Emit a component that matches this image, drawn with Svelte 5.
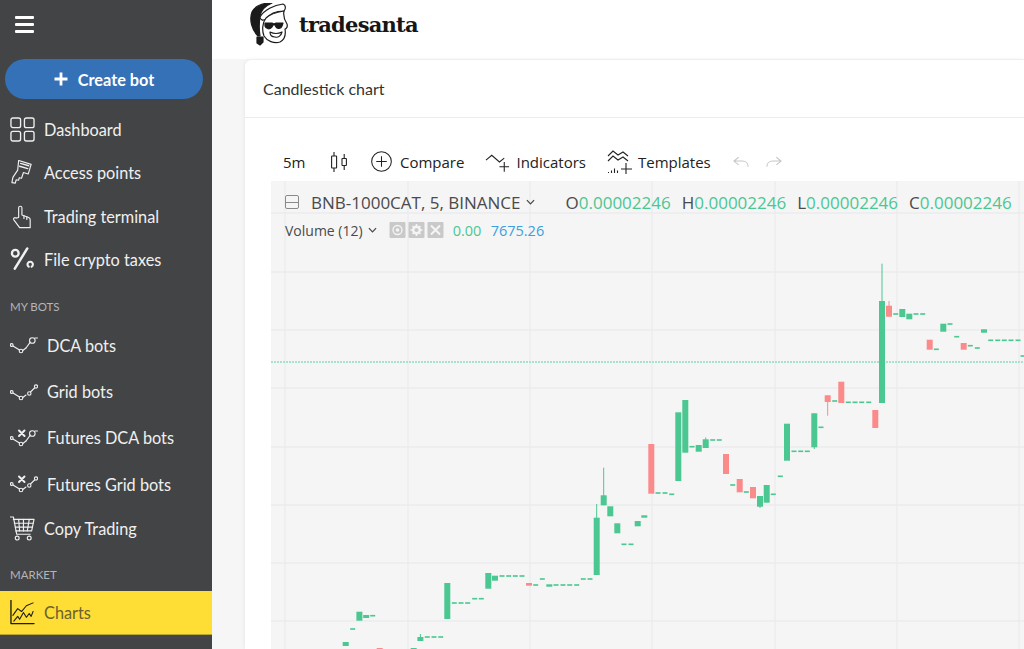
<script>
  const nav = [
    { label: "Dashboard", icon: "grid" },
    { label: "Access points", icon: "key" },
    { label: "Trading terminal", icon: "hand" },
    { label: "File crypto taxes", icon: "percent" }
  ];
  const bots = [
    { label: "DCA bots", icon: "dca" },
    { label: "Grid bots", icon: "gridbot" },
    { label: "Futures DCA bots", icon: "fdca" },
    { label: "Futures Grid bots", icon: "fgrid" }
  ];

  const vLines = [285, 408, 530, 652, 775, 897, 1019];
  const hLines = [213, 272, 330, 388, 447, 505, 563, 621];

  // x, top, bottom, optional wick top / bottom (page coordinates)
  const up = [
    [345.7, 642, 646], [359.4, 611.7, 620.7], [366.2, 615, 618], [413.7, 648, 652],
    [420.4, 637, 641, 634], [447.3, 583, 619], [488.3, 573, 588.7], [495, 575.7, 580.7],
    [549.3, 584.3, 586.7], [596.7, 517.7, 575, 504], [603.7, 495.3, 505.3, 467.7],
    [610.3, 506.3, 516.3], [617.3, 523.3, 533.3], [637.7, 521, 526.3], [644.3, 515.3, 517.7],
    [678.3, 412.3, 481], [685.3, 400, 452.7], [698.7, 445, 451.7], [705.7, 439.3, 448, 437.5],
    [760, 496, 506.7, 496, 508], [766.7, 485, 502.7], [787, 423.7, 460.7],
    [814.3, 413.3, 447.3, 413.3, 449], [882, 301, 403, 263.7], [902.3, 309, 317],
    [909.3, 313.7, 319.3], [943.3, 323.7, 331.7], [984, 329.3, 332.7]
  ];
  const down = [
    [379.7, 648, 652], [529, 583, 585.7], [651.3, 444, 493.7], [726, 454, 474],
    [739.7, 479, 492.3], [753, 487, 498.3], [827.7, 395.3, 402, 395.3, 415.7],
    [841.3, 381.7, 403], [875.3, 410, 428], [889, 305.7, 316.7, 301],
    [929.7, 339.7, 349.7], [963.7, 343, 349.7]
  ];
  // flat candles: x, y
  const flats = [
    [352.7, 629], [372.7, 615.7], [427.3, 637], [434, 637], [440.7, 637], [454.3, 603],
    [461, 603], [467.7, 603], [474.7, 598.7], [481.3, 598.7], [502, 576], [508.7, 576],
    [515.3, 576], [522, 576], [535.7, 585], [542.3, 579], [556, 585], [563, 585], [569.7, 585],
    [576.7, 585], [583.3, 579], [590, 579], [624, 544.3], [631, 544.3], [658, 493], [665, 493],
    [671.7, 494.3], [692, 446.7], [712.7, 440], [719.3, 440], [732.7, 485], [746.3, 492],
    [773.3, 494.3], [780.3, 476.3], [794, 451.3], [800.7, 451.3], [807.3, 451.3], [821, 427.3],
    [834.7, 401], [848.3, 402.3], [855, 402.3], [861.7, 402.3], [868.7, 402.3], [895.7, 314],
    [916, 314], [922.7, 314], [936.3, 349.3], [950, 324], [956.7, 336.7], [970.3, 345.7],
    [977.3, 348], [990.7, 340.3], [997.7, 340.3], [1004.3, 340.3], [1011, 340.3], [1018, 340.3],
    [1023, 356]
  ];
</script>

<div class="app">
  <aside class="sidebar">
    <button class="burger" aria-label="Menu"><span></span><span></span><span></span></button>
    <button class="create">
      <svg class="plus" viewBox="0 0 14 14" fill="none" stroke="#fff" stroke-width="2.800"><path d="M7 .5v13M.5 7h13" /></svg>
      Create bot
    </button>

    <nav class="group">
      {#each nav as item}
        <div class="item">
          <svg class="ico" viewBox="0 0 26 26" fill="none" stroke="currentColor" stroke-width="1.400" stroke-linecap="round" stroke-linejoin="round">
            {#if item.icon === "grid"}
              <rect x="1" y="1" width="10" height="10" rx="2" /><rect x="15" y="1" width="10" height="10" rx="2" />
              <rect x="1" y="15" width="10" height="10" rx="2" /><rect x="15" y="15" width="10" height="10" rx="2" />
            {:else if item.icon === "key"}
              <path d="M9 .5L22 4.500l-3 10-5-1.500-2 6-2.500-.5-.5 2.500-2.500-.5-1 3.500-3.500-.5 1-5.500 5-7.500z" stroke-width="1.200" /><path d="M11 3.500l8.500 2.500M10 6.500l8.500 2.500" />
            {:else if item.icon === "hand"}
              <path d="M9 14V4a1.700 1.700 0 0 1 3.400 0v7.500l7 2.500c1.300.5 1.600 1.300 1.600 2.500v8H10l-6-8c-1-1.400.8-3 2.300-1.800z" stroke-width="1.200" /><path d="M14.500 12v3M17.500 13v3" stroke-width="1.200" />
            {:else}
              <circle cx="5.500" cy="6.500" r="3.500" stroke-width="2.400" /><path d="M18 1.500L5 22.500" stroke-width="2.600" /><path d="M22.500 20.500a2.800 2.800 0 1 0-3 0" stroke-width="2.200" />
            {/if}
          </svg>
          <span>{item.label}</span>
        </div>
      {/each}
    </nav>

    <div class="heading first">MY BOTS</div>
    <nav class="group bots">
      {#each bots as item}
        <div class="item bot">
          <svg class="bot-ico" viewBox="0 0 28 18" fill="none" stroke="currentColor" stroke-width="1.100" stroke-linecap="round">
            <circle cx="1.700" cy="9" r="1.400" /><path d="M3 10l6.500 4" /><circle cx="11" cy="15" r="1.800" /><path d="M12.800 14.500l3.200-2.500" />
            {#if item.icon === "dca" || item.icon === "fdca"}
              <path d="M16 12l4.300-5.800" /><circle cx="22.300" cy="4.500" r="2.800" /><path d="M25 2h2.500" />
            {:else}
              <circle cx="19.300" cy="10.500" r="1.700" /><path d="M20.500 9l4-4" /><circle cx="26" cy="3.500" r="1.600" />
            {/if}
            {#if item.icon === "fdca" || item.icon === "fgrid"}
              <path d="M9 1.500l5.500 5.500M14.500 1.500L9 7" stroke-width="2" />
            {/if}
          </svg>
          <span>{item.label}</span>
        </div>
      {/each}
    </nav>

    <div class="item copy">
      <svg class="ico" viewBox="0 0 26 26" fill="none" stroke="currentColor" stroke-width="1.200" stroke-linecap="round" stroke-linejoin="round">
        <path d="M0.500 1h3L7 19h14" /><path d="M3.500 3.500H25l-2.500 12H6" /><path d="M9 3.500l1 12M14 3.500v12M20 3.500l-2 12M4.500 7.500H24M5.500 11.500h18" />
        <circle cx="7.500" cy="23" r="2" /><circle cx="20" cy="23" r="2" />
      </svg>
      <span>Copy Trading</span>
    </div>

    <div class="heading market">MARKET</div>
    <div class="item active">
      <svg class="ico" viewBox="0 0 26 26" fill="none" stroke="currentColor" stroke-width="1.100" stroke-linecap="round" stroke-linejoin="round">
        <path d="M1 0v24.500h24" stroke-width="1.400" /><path d="M3 16l5-7 4 3 5-6 7-3" /><path d="M4 22l4-5 2 3 4-7 3 5 3-4 2 3 2-5" />
      </svg>
      <span>Charts</span>
    </div>
  </aside>

  <div class="main">
    <header class="topbar">
      <svg class="santa" viewBox="0 0 38 43" fill="none" stroke="#1b1b1b" stroke-width="1.200" stroke-linejoin="round" stroke-linecap="round">
        <path d="M8 33C2 27-1 17 2 9 5 3 13 0 22 0 15 3 11 7 10 13c-1 7-1 14 0 20z" fill="#1b1b1b" />
        <path d="M10 14C14 7 24 2 33 1c3 1 3 5 1 7-6 0-14 2-18 8-3 2-6 1-6-2z" fill="#fff" />
        <path d="M16 15c4-4 12-6 18-7-1 5 1 10 3 13 1 3-1 5-2 5 1 6-1 11-5 13-6 2-13-1-16-6-2-5-2-13 2-18z" fill="#fff" />
        <path d="M15 20h7l2 1 2-1h7l-1 3c-1 3-5 3-6 1l-1-2h-2l-1 2c-2 3-6 2-7-1z" fill="#1b1b1b" />
        <path d="M20 29c4 2 8 2 12 0-1 4-4 6-7 5-3 0-5-2-5-5z" />
        <path d="M7 34h6v5l-3 3-3-2z" fill="#1b1b1b" />
      </svg>
      <span class="brand">tradesanta</span>
    </header>

    <div class="content">
      <section class="card">
        <div class="card-title">Candlestick chart</div>
        <div class="card-body">
          <div class="toolbar">
            <span class="tf">5m</span>
            <svg class="tb-candles" viewBox="0 0 16 20" fill="none" stroke="#222" stroke-width="1.100">
              <rect x=".6" y="4" width="5" height="12" rx=".5" /><path d="M3 0v4M3 16v4" />
              <rect x="11" y="6.500" width="4.400" height="7" rx=".5" /><path d="M13.200 2v4.500M13.200 13.500V18" />
            </svg>
            <button class="tb compare">
              <svg width="21" height="21" viewBox="0 0 22 22" fill="none" stroke="#222" stroke-width="1.100"><circle cx="11" cy="11" r="10.300" /><path d="M11 5.500v11M5.500 11h11" /></svg>
              Compare
            </button>
            <button class="tb indicators">
              <svg width="26" height="22" viewBox="0 0 27 22" fill="none" stroke="#222" stroke-width="1.100"><path d="M1 9l6-5 8 7 5-4" /><path d="M20 11v10M15 16h10" /></svg>
              Indicators
            </button>
            <button class="tb templates">
              <svg width="26" height="26" viewBox="0 0 26 26" fill="none" stroke="#222" stroke-width="1.100"><path d="M1 7l5-5 5 4 5-3 5 4" /><path d="M1 12l5-5 5 4 5-3 5 4" /><path d="M19 14v11M14 20h11" /><path d="M1 23.500h1M4.500 21.500v2.500M7.500 19.500v4.500M10.500 21.500v2.500" /></svg>
              Templates
            </button>
            <svg class="undo" viewBox="0 0 18 12" fill="none" stroke="#c6c6c6" stroke-width="1.100"><path d="M6 1L1 5l5 4M1 5h9c4 0 6 3 6 6" /></svg>
            <svg class="redo" viewBox="0 0 18 12" fill="none" stroke="#c6c6c6" stroke-width="1.100"><path d="M12 1l5 4-5 4M17 5H8c-4 0-6 3-6 6" /></svg>
          </div>

          <div class="chart">
            <svg class="plot" viewBox="271 181 753 468">
              {#each vLines as x}<line x1={x} x2={x} y1="181" y2="649" class="grid" />{/each}
              {#each hLines as y}<line x1="271" x2="1024" y1={y} y2={y} class="grid" />{/each}
              <line x1="271" x2="1024" y1="362" y2="362" class="price" />
              {#each up as [x, t, b, wt, wb]}
                {#if wt !== undefined}<line x1={x} x2={x} y1={wt} y2={wb ?? b} class="wick-up" />{/if}
                <rect x={x - 3} y={t} width="6" height={b - t} class="up" />
              {/each}
              {#each down as [x, t, b, wt, wb]}
                {#if wt !== undefined}<line x1={x} x2={x} y1={wt} y2={wb ?? b} class="wick-down" />{/if}
                <rect x={x - 3} y={t} width="6" height={b - t} class="down" />
              {/each}
              {#each flats as [x, y]}
                <rect x={x - 2.500} y={y - 0.800} width="5" height="1.600" class="up" />
              {/each}
            </svg>

            <div class="legend">
              <div class="legend-main">
                <span class="collapse"></span>
                <span class="symbol">BNB-1000CAT, 5, BINANCE</span>
                <svg class="chev" viewBox="0 0 10 6" fill="none" stroke="#444" stroke-width="1.300"><path d="M1 1l4 4 4-4" /></svg>
                <span class="ohlc">
                  <span>O<b>0.00002246</b></span>
                  <span>H<b>0.00002246</b></span>
                  <span>L<b>0.00002246</b></span>
                  <span>C<b>0.00002246</b></span>
                </span>
              </div>
              <div class="legend-sub">
                <span class="vol">Volume (12)</span>
                <svg class="chev" viewBox="0 0 10 6" fill="none" stroke="#444" stroke-width="1.300"><path d="M1 1l4 4 4-4" /></svg>
                <span class="vol-btns">
                  <svg viewBox="0 0 16 16"><rect width="16" height="16" rx="1" fill="#c9c9c9" /><circle cx="8" cy="8" r="4.500" fill="none" stroke="#f5f5f5" stroke-width="1.300" /><circle cx="8" cy="8" r="1.800" fill="#f5f5f5" /></svg>
                  <svg viewBox="0 0 16 16"><rect width="16" height="16" rx="1" fill="#c9c9c9" /><circle cx="8" cy="8" r="3.300" fill="none" stroke="#f5f5f5" stroke-width="2.400" /><path d="M8 2v2M8 12v2M2 8h2M12 8h2M4 4l1 1M11 11l1 1M12 4l-1 1M5 11l-1 1" stroke="#f5f5f5" stroke-width="1.600" /></svg>
                  <svg viewBox="0 0 16 16"><rect width="16" height="16" rx="1" fill="#c9c9c9" /><path d="M3.500 3.500l9 9M12.500 3.500l-9 9" stroke="#f5f5f5" stroke-width="2" /></svg>
                </span>
                <span class="v-green">0.00</span>
                <span class="v-blue">7675.26</span>
              </div>
            </div>
          </div>
        </div>
      </section>
    </div>
  </div>
</div>

<style>
  :global(body) {
    margin: 0;
    background: #f6f6f6;
  }

  .app {
    display: flex;
    height: 649px;
    overflow: hidden;
    font-family: "Open Sans", "Liberation Sans", sans-serif;
  }

  button {
    font: inherit;
    border: none;
    background: none;
    padding: 0;
  }

  .sidebar {
    width: 212px;
    flex: none;
    background: #434446;
    color: #f0f0f0;
    display: flex;
    flex-direction: column;
    font-family: Lato, sans-serif;
    font-size: 16.300px;
  }

  .burger {
    display: flex;
    flex-direction: column;
    gap: 4px;
    margin: 16px 0 0 15px;
    width: 19px;
  }

  .burger span {
    height: 3px;
    background: #fff;
    border-radius: 1px;
  }

  .create {
    margin: 26px 9px 0 5px;
    height: 40px;
    border-radius: 21px;
    background: #3471b7;
    color: #fff;
    font-weight: 700;
    font-size: 16.300px;
    display: flex;
    align-items: center;
    justify-content: center;
    gap: 10px;
  }

  .plus {
    width: 14px;
    height: 14px;
  }

  .group {
    display: flex;
    flex-direction: column;
    margin-top: 9px;
  }

  .item {
    height: 43.300px;
    flex: none;
    display: flex;
    align-items: center;
    gap: 9px;
    padding-left: 10px;
  }

  .ico {
    width: 25px;
    height: 25px;
    flex: none;
  }

  .heading {
    font-size: 11.500px;
    color: #b4b5b6;
    padding-left: 10px;
  }

  .heading.first {
    margin-top: 19px;
  }

  .bots {
    margin-top: 9px;
  }

  .bot {
    height: 46.300px;
    gap: 9px;
  }

  .bot-ico {
    width: 28px;
    height: 18px;
    flex: none;
  }

  .copy {
    margin-top: -1px;
  }

  .heading.market {
    margin-top: 18px;
  }

  .item.active {
    margin-top: 10px;
    height: 43px;
    background: #fedd35;
    color: #6a6230;
    box-shadow: 0 1px 0 #b9a531;
  }

  .active .ico {
    color: #1c1c14;
  }

  .main {
    flex: 1;
    min-width: 0;
    display: flex;
    flex-direction: column;
  }

  .topbar {
    height: 59px;
    box-sizing: border-box;
    flex: none;
    background: #fff;
    display: flex;
    align-items: flex-start;
    padding: 3px 0 0 38px;
    gap: 11px;
  }

  .santa {
    width: 38px;
    height: 43px;
    flex: none;
  }

  .brand {
    font-family: "DejaVu Serif", serif;
    font-weight: 700;
    font-size: 21px;
    letter-spacing: -0.75px;
    color: #161616;
    margin-top: 9px;
  }

  .content {
    flex: 1;
    padding: 1px 0 0 33px;
    min-height: 0;
  }

  .card {
    height: 100%;
    background: #fff;
    border-radius: 6px 0 0 0;
    box-shadow: 0 0 4px rgba(0, 0, 0, 0.08);
    display: flex;
    flex-direction: column;
  }

  .card-title {
    height: 58px;
    flex: none;
    padding-left: 18px;
    display: flex;
    align-items: center;
    font-family: Lato, sans-serif;
    font-size: 16px;
    color: #333;
    border-bottom: 1px solid #ececec;
    box-sizing: border-box;
  }

  .card-body {
    flex: 1;
    min-height: 0;
    padding: 24px 0 0 26px;
    display: flex;
    flex-direction: column;
  }

  .toolbar {
    height: 39px;
    flex: none;
    display: flex;
    align-items: center;
    padding-left: 12px;
    font-family: "Open Sans", sans-serif;
    font-size: 15px;
    color: #222;
  }

  .tf {
    width: 48px;
  }

  .tb-candles {
    width: 16px;
    height: 20px;
    margin-right: 24px;
  }

  .tb {
    display: flex;
    align-items: center;
    gap: 8px;
    color: #222;
  }

  .compare {
    margin-right: 21px;
  }

  .indicators {
    gap: 5px;
    margin-right: 21px;
  }

  .templates {
    gap: 5px;
    margin-right: 22px;
  }

  .undo, .redo {
    width: 17px;
    height: 12px;
  }

  .redo {
    margin-left: 15px;
  }

  .chart {
    flex: 1;
    min-height: 0;
    position: relative;
    background: #f5f5f5;
    overflow: hidden;
  }

  .plot {
    display: block;
    width: 753px;
    height: 468px;
  }

  .grid {
    stroke: #ebebee;
    stroke-width: 1.300;
  }

  .price {
    stroke: #a5e4c8;
    stroke-width: 2;
    stroke-dasharray: 2 1;
  }

  .up { fill: #4bc792; }
  .down { fill: #fb8a8a; }
  .wick-up { stroke: #4bc792; stroke-width: 1; }
  .wick-down { stroke: #fb8a8a; stroke-width: 1; }

  .legend {
    position: absolute;
    left: 14px;
    top: 10px;
    right: 0;
    color: #4a4a4a;
    font-family: "Open Sans", sans-serif;
    white-space: nowrap;
  }

  .legend-main {
    display: flex;
    align-items: center;
    font-size: 17px;
    height: 22px;
  }

  .collapse {
    width: 12px;
    height: 12px;
    border: 1px solid #8a8a8a;
    border-radius: 2px;
    margin-right: 12px;
    background: linear-gradient(#8a8a8a, #8a8a8a) center / 100% 1px no-repeat;
  }

  .chev {
    width: 9px;
    height: 6px;
    margin-left: 5px;
  }

  .ohlc {
    display: flex;
    gap: 11px;
    margin-left: 31px;
  }

  .ohlc b {
    font-weight: 400;
    color: #4bc792;
  }

  .legend-sub {
    display: flex;
    align-items: center;
    margin-top: 9px;
    font-size: 14px;
    height: 16px;
  }

  .vol-btns {
    display: flex;
    gap: 2px;
    margin: 0 9px 0 12px;
  }

  .vol-btns svg {
    width: 17px;
    height: 16px;
  }

  .v-green {
    color: #4bc792;
    width: 38px;
    font-size: 14.500px;
  }

  .v-blue {
    color: #3b9fe0;
    font-size: 14.500px;
    font-weight: 500;
  }
</style>
